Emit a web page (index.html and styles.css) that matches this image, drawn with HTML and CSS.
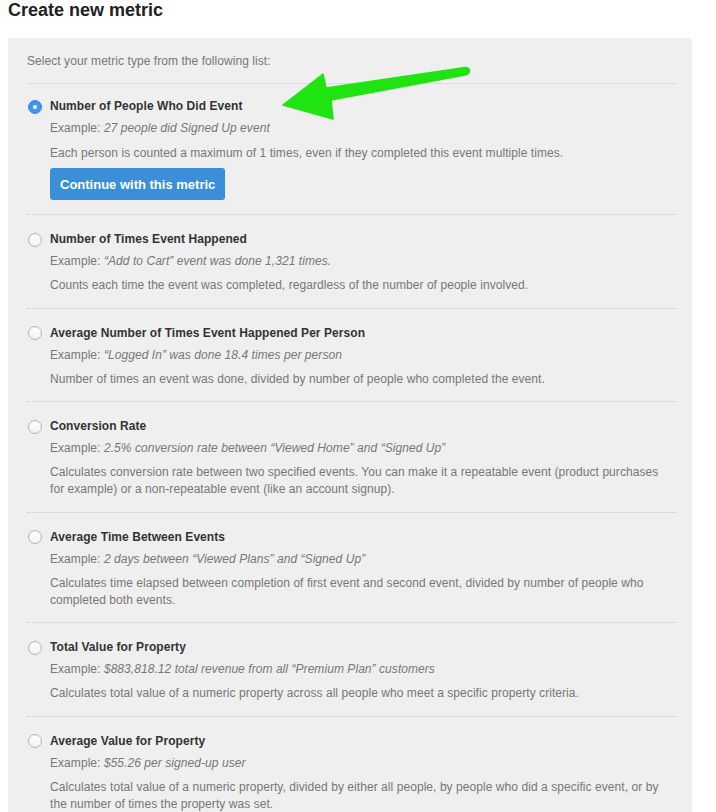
FILE: index.html
```html
<!DOCTYPE html>
<html lang="en">
<head>
<meta charset="utf-8">
<title>Create new metric</title>
<link rel="stylesheet" href="styles.css">
</head>
<body>
<h1 class="page-title">Create new metric</h1>
<section class="panel">
  <p class="intro">Select your metric type from the following list:</p>
  <ul class="metric-list">
    <li class="metric metric-first">
      <span class="radio radio-on"></span>
      <div class="metric-body">
        <div class="metric-name">Number of People Who Did Event</div>
        <div class="metric-example">Example: <em>27 people did Signed Up event</em></div>
        <div class="metric-desc">Each person is counted a maximum of 1 times, even if they completed this event multiple times.</div>
        <button class="btn-continue" type="button">Continue with this metric</button>
      </div>
    </li>
    <li class="metric">
      <span class="radio"></span>
      <div class="metric-body">
        <div class="metric-name">Number of Times Event Happened</div>
        <div class="metric-example">Example: <em>“Add to Cart” event was done 1,321 times.</em></div>
        <div class="metric-desc">Counts each time the event was completed, regardless of the number of people involved.</div>
      </div>
    </li>
    <li class="metric">
      <span class="radio"></span>
      <div class="metric-body">
        <div class="metric-name">Average Number of Times Event Happened Per Person</div>
        <div class="metric-example">Example: <em>“Logged In” was done 18.4 times per person</em></div>
        <div class="metric-desc">Number of times an event was done, divided by number of people who completed the event.</div>
      </div>
    </li>
    <li class="metric">
      <span class="radio"></span>
      <div class="metric-body">
        <div class="metric-name">Conversion Rate</div>
        <div class="metric-example">Example: <em>2.5% conversion rate between “Viewed Home” and “Signed Up”</em></div>
        <div class="metric-desc">Calculates conversion rate between two specified events. You can make it a repeatable event (product purchases for example) or a non-repeatable event (like an account signup).</div>
      </div>
    </li>
    <li class="metric">
      <span class="radio"></span>
      <div class="metric-body">
        <div class="metric-name">Average Time Between Events</div>
        <div class="metric-example">Example: <em>2 days between “Viewed Plans” and “Signed Up”</em></div>
        <div class="metric-desc">Calculates time elapsed between completion of first event and second event, divided by number of people who completed both events.</div>
      </div>
    </li>
    <li class="metric">
      <span class="radio"></span>
      <div class="metric-body">
        <div class="metric-name">Total Value for Property</div>
        <div class="metric-example">Example: <em>$883,818.12 total revenue from all “Premium Plan” customers</em></div>
        <div class="metric-desc">Calculates total value of a numeric property across all people who meet a specific property criteria.</div>
      </div>
    </li>
    <li class="metric">
      <span class="radio"></span>
      <div class="metric-body">
        <div class="metric-name">Average Value for Property</div>
        <div class="metric-example">Example: <em>$55.26 per signed-up user</em></div>
        <div class="metric-desc">Calculates total value of a numeric property, divided by either all people, by people who did a specific event, or by the number of times the property was set.</div>
      </div>
    </li>
  </ul>
</section>
<svg class="arrow" width="716" height="140" viewBox="0 0 716 140" aria-hidden="true">
  <path d="M283 105 L323 74 L326 88 L465 67.5 Q470 67.5 469.5 71.5 Q469 74.5 465 75 L331 100 L333 119 Z" fill="#1fe412" stroke="#1fe412" stroke-width="1.5" stroke-linejoin="round"/>
</svg>
</body>
</html>
```

FILE: styles.css
```css
html, body {
  background: #ffffff;
}

body {
  margin: 0 8px;
  font-family: "Liberation Sans", Arial, Helvetica, sans-serif;
  font-size: 12px;
  line-height: 17px;
  letter-spacing: 0.06px;
  color: #777777;
  position: relative;
  overflow: hidden;
  height: 812px;
}

.page-title {
  margin: 0 0 18px 0;
  font-size: 18px;
  line-height: 20px;
  font-weight: bold;
  letter-spacing: 0;
  color: #222222;
}

.panel {
  background: #efefef;
  border-radius: 3px;
  margin-right: 16px;
  padding: 15px 15px 40px 19px;
}

.intro {
  margin: 0;
  padding-bottom: 13px;
  border-bottom: 1px solid #dcdcdc;
}

.metric-list {
  list-style: none;
  margin: 0;
  padding: 0;
}

.metric {
  display: flex;
  align-items: flex-start;
  gap: 8px;
  padding: 16px 6px 13.6px 1px;
  border-bottom: 1px dotted #c8c8c8;
}

.metric-first {
  padding-top: 14px;
  padding-bottom: 14px;
}

.metric:last-child {
  border-bottom: none;
}

.radio {
  flex: 0 0 auto;
  width: 12px;
  height: 12px;
  margin-top: 1.5px;
  border-radius: 50%;
  border: 1px solid #b4b4b4;
  background: linear-gradient(#ffffff, #f2f2f2);
  box-shadow: inset 0 1px 1px rgba(0, 0, 0, 0.05);
  position: relative;
}

.radio-on {
  border-color: #3b88ea;
  background: #4393f2;
}

.radio-on::after {
  content: "";
  position: absolute;
  left: 4px;
  top: 4px;
  width: 4px;
  height: 4px;
  border-radius: 50%;
  background: #ffffff;
}

.metric-body {
  flex: 1 1 auto;
  display: flex;
  flex-direction: column;
  align-items: flex-start;
}

.metric-name {
  font-weight: bold;
  color: #333333;
}

.metric-example {
  margin-top: 5px;
}

.metric-example em {
  font-style: italic;
}

.metric-desc {
  margin-top: 7px;
}

.metric-first .metric-desc {
  margin-top: 8px;
}

.btn-continue {
  margin-top: 6px;
  height: 32px;
  padding: 0 10px;
  border: none;
  border-radius: 3px;
  background: #3a8fd8;
  color: #ffffff;
  font-family: "Liberation Sans", Arial, Helvetica, sans-serif;
  font-size: 13px;
  font-weight: bold;
}

.arrow {
  position: absolute;
  left: -8px;
  top: 0;
  pointer-events: none;
}
```
